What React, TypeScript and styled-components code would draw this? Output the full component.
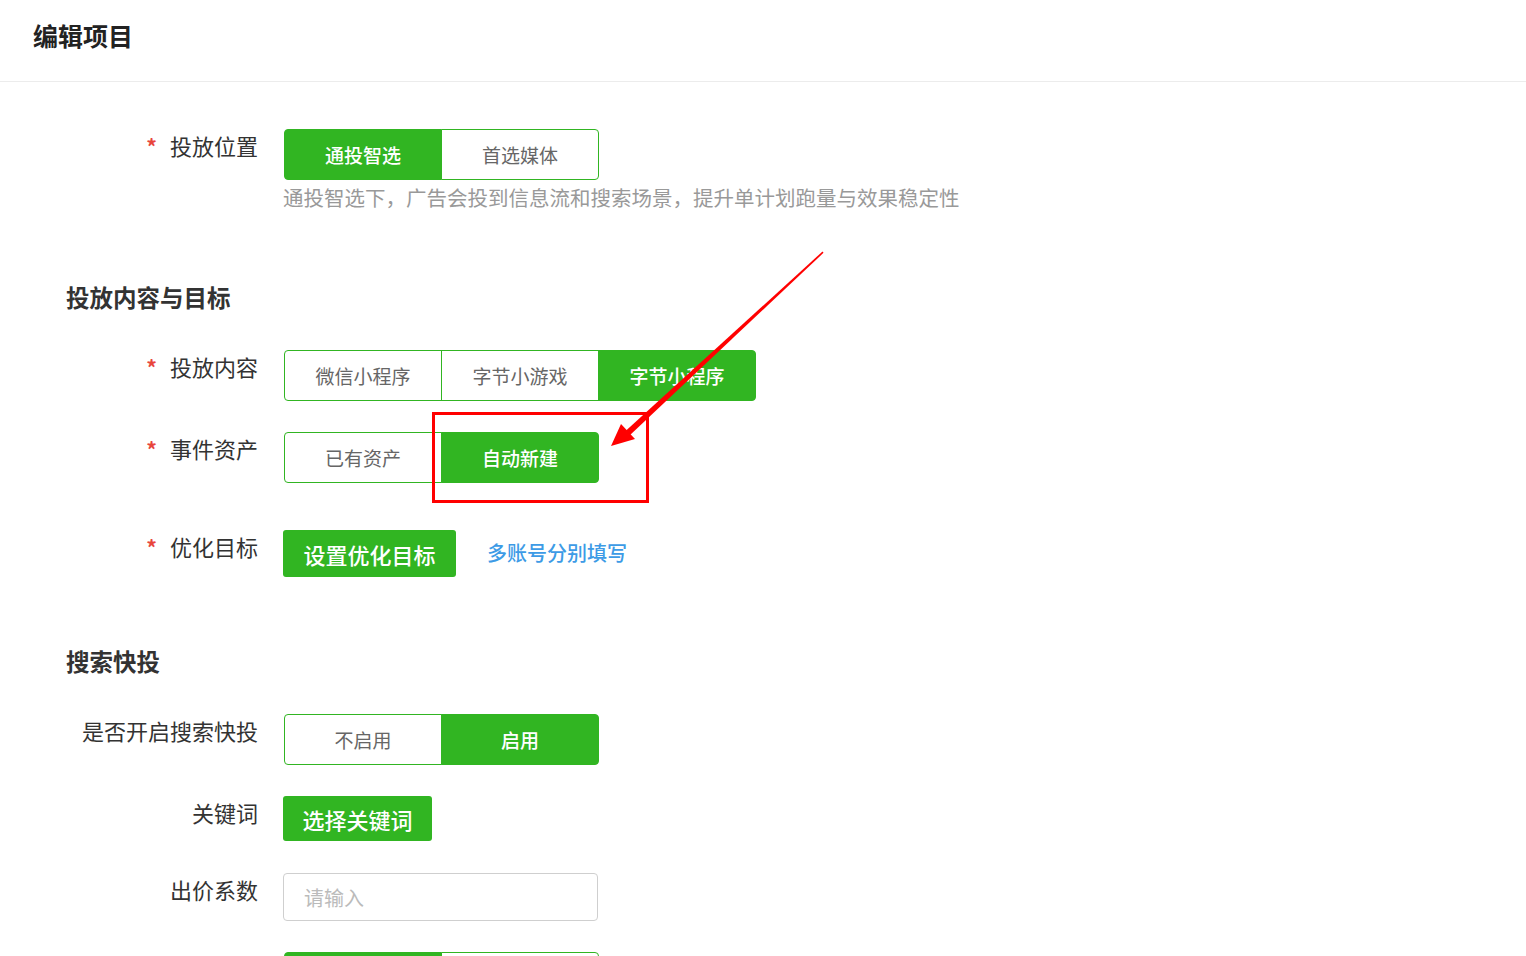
import React from "react";
import styled, { createGlobalStyle } from "styled-components";

const GREEN = "#31b522";

const Global = createGlobalStyle`
  html, body {
    margin: 0;
    padding: 0;
    background: #fff;
    font-family: "Noto Sans CJK SC", "Noto Sans", sans-serif;
    color: #333;
    overflow: hidden;
  }
`;

type segProp = {
  options: string[];
  active: number;
};

const SegmentedControl = ({ options, active }: segProp) => {
  return (
    <Segmented>
      {options.map((o, i) => (
        <SegButton key={i} $active={i === active} $first={i === 0} $last={i === options.length - 1}>
          {o}
        </SegButton>
      ))}
    </Segmented>
  );
};

type rowProp = {
  label: string;
  required?: boolean;
  gap?: number;
  children: React.ReactNode;
};

const FormRow = ({ label, required, gap, children }: rowProp) => {
  return (
    <Row $gap={gap ?? 31}>
      <Label>
        {required && <Star>*</Star>}
        {label}
      </Label>
      <Control>{children}</Control>
    </Row>
  );
};

export default function App() {
  return (
    <Page>
      <Global />
      <Header>
        <Title>编辑项目</Title>
      </Header>
      <Body>
        <FormRow label="投放位置" required gap={0}>
          <SegmentedControl options={["通投智选", "首选媒体"]} active={0} />
          <Help>通投智选下，广告会投到信息流和搜索场景，提升单计划跑量与效果稳定性</Help>
        </FormRow>

        <SectionTitle $top={72}>投放内容与目标</SectionTitle>
        <FormRow label="投放内容" required>
          <SegmentedControl options={["微信小程序", "字节小游戏", "字节小程序"]} active={2} />
        </FormRow>
        <FormRow label="事件资产" required gap={47}>
          <SegmentedControl options={["已有资产", "自动新建"]} active={1} />
        </FormRow>
        <FormRow label="优化目标" required gap={0}>
          <Inline>
            <GreenButton $w={173} $h={47}>设置优化目标</GreenButton>
            <Link>多账号分别填写</Link>
          </Inline>
        </FormRow>

        <SectionTitle $top={69}>搜索快投</SectionTitle>
        <FormRow label="是否开启搜索快投">
          <SegmentedControl options={["不启用", "启用"]} active={1} />
        </FormRow>
        <FormRow label="关键词" gap={32}>
          <GreenButton $w={149} $h={45}>选择关键词</GreenButton>
        </FormRow>
        <FormRow label="出价系数">
          <Input placeholder="请输入" />
        </FormRow>
        <FormRow label="" gap={0}>
          <SegmentedControl options={["", ""]} active={0} />
        </FormRow>
      </Body>

      <Overlay width="1526" height="956" viewBox="0 0 1526 956">
        <rect x="433.5" y="413.5" width="214" height="88" fill="none" stroke="#ff0000" strokeWidth="3" />
        <polygon points="822.5,251.5 823.5,252.8 629,436 625,431.5" fill="#ff0000" />
        <polygon points="611,446 621,424 635,439" fill="#ff0000" />
      </Overlay>
    </Page>
  );
}

const Page = styled.div`
  position: relative;
  width: 1526px;
  min-height: 956px;
`;

const Header = styled.div`
  height: 82px;
  border-bottom: 1px solid #ececec;
  display: flex;
  align-items: center;
  padding-left: 33px;
  padding-bottom: 11px;
  box-sizing: border-box;
`;

const Title = styled.h1`
  margin: 0;
  font-size: 25px;
  font-weight: 700;
  color: #222;
`;

const Body = styled.div`
  padding-top: 47px;
  display: flex;
  flex-direction: column;
`;

const Row = styled.div<{ $gap: number }>`
  display: grid;
  grid-template-columns: 258px 1fr;
  column-gap: 25px;
  align-items: start;
  margin-bottom: ${(p) => p.$gap}px;
`;

const Label = styled.div`
  display: flex;
  justify-content: flex-end;
  align-items: center;
  height: 31px;
  font-size: 22px;
  color: #333;
  white-space: nowrap;
`;

const Star = styled.span`
  color: #e8453c;
  font-size: 21px;
  font-weight: 700;
  margin-right: 13px;
  margin-top: 2px;
`;

const Control = styled.div`
  display: flex;
  flex-direction: column;
  align-items: flex-start;
`;

const Segmented = styled.div`
  display: flex;
  margin-left: 1px;
`;

const SegButton = styled.div<{ $active: boolean; $first: boolean; $last: boolean }>`
  width: 158px;
  height: 51px;
  box-sizing: border-box;
  display: flex;
  align-items: center;
  justify-content: center;
  border: 1px solid ${GREEN};
  margin-left: ${(p) => (p.$first ? 0 : -1)}px;
  border-radius: ${(p) => (p.$first ? "4px 0 0 4px" : p.$last ? "0 4px 4px 0" : "0")};
  background: ${(p) => (p.$active ? GREEN : "#fff")};
  color: ${(p) => (p.$active ? "#fff" : "#666")};
  font-size: 19px;
  font-weight: ${(p) => (p.$active ? 500 : 400)};
`;

const Help = styled.div`
  margin-top: 4px;
  font-size: 20.5px;
  line-height: 26px;
  color: #999;
`;

const SectionTitle = styled.h2<{ $top: number }>`
  margin: ${(p) => p.$top}px 0 38px 66px;
  font-size: 23.5px;
  line-height: 30px;
  font-weight: 700;
  color: #333;
`;

const Inline = styled.div`
  display: flex;
  align-items: center;
  gap: 31px;
`;

const GreenButton = styled.div<{ $w: number; $h: number }>`
  width: ${(p) => p.$w}px;
  height: ${(p) => p.$h}px;
  display: flex;
  align-items: center;
  justify-content: center;
  background: ${GREEN};
  color: #fff;
  font-size: 22px;
  font-weight: 500;
  border-radius: 3px;
`;

const Link = styled.span`
  color: #3d9be6;
  font-size: 20px;
  font-weight: 500;
  margin-top: -3px;
`;

const Input = styled.input`
  width: 315px;
  height: 48px;
  box-sizing: border-box;
  border: 1px solid #cfcfcf;
  border-radius: 4px;
  padding: 0 20px;
  font-size: 20px;
  font-family: "Noto Sans CJK SC", "Noto Sans", sans-serif;
  outline: none;
  &::placeholder {
    color: #bbb;
  }
`;

const Overlay = styled.svg`
  position: absolute;
  top: 0;
  left: 0;
  pointer-events: none;
`;
